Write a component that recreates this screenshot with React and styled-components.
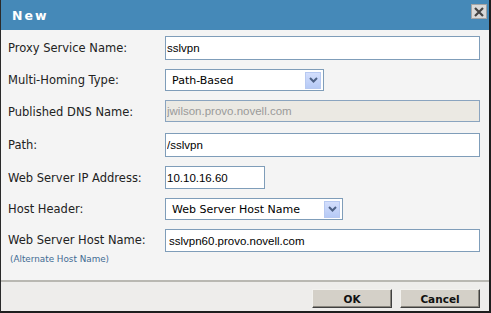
import React from 'react';
import styled, { createGlobalStyle } from 'styled-components';

const GlobalStyle = createGlobalStyle`
  html, body {
    margin: 0;
    padding: 0;
    background: #ffffff;
  }
`;

const Dialog = styled.div`
  width: 491px;
  height: 313px;
  box-sizing: border-box;
  display: flex;
  flex-direction: column;
  border-left: 1px solid #2a2a2a;
  border-right: 2px solid #1e1e1e;
  border-bottom: 2px solid #1e1e1e;
  background: #f4f4f4;
  font-family: 'DejaVu Sans', Verdana, sans-serif;
`;

const TitleBar = styled.div`
  height: 30px;
  flex: none;
  display: flex;
  align-items: flex-start;
  justify-content: space-between;
  background: #4589b8;
  padding: 0 2px 0 11px;
`;

const Title = styled.h1`
  margin: 9px 0 0;
  font-size: 12.5px;
  font-weight: bold;
  letter-spacing: 2px;
  color: #ffffff;
  line-height: 13px;
`;

const CloseButton = styled.button`
  margin-top: 4px;
  width: 16px;
  height: 15px;
  padding: 0;
  display: flex;
  align-items: center;
  justify-content: center;
  background: #d9d9d9;
  border: 1px solid #a4a4a4;
  box-sizing: border-box;
  cursor: pointer;
`;

const Form = styled.div`
  flex: 1;
  display: grid;
  grid-template-columns: 157px 1fr;
  align-items: center;
  align-content: start;
  row-gap: 9px;
  padding: 6px 9px 0 7px;
`;

const Label = styled.label`
  font-size: 11.5px;
  color: #222222;
  line-height: ${p => p.$tall ? '23px' : 'normal'};
`;

const LabelStack = styled.div`
  display: flex;
  flex-direction: column;
  align-items: flex-start;
  align-self: start;
`;

const AltLink = styled.a`
  font-size: 8.8px;
  color: #3f6b93;
  line-height: 14px;
  padding-left: 2px;
  text-decoration: none;
`;

const TextInput = styled.input`
  box-sizing: border-box;
  width: ${p => p.$width || '100%'};
  height: ${p => p.$height || '24px'};
  margin: 0 0 ${p => p.$after || '0'};
  padding: 0 ${p => p.$pad || '1px'};
  border: 1px solid #7f9db9;
  background: #ffffff;
  color: #000000;
  font-family: 'Liberation Sans', Arial, sans-serif;
  font-size: 11.5px;
  align-self: ${p => p.$top ? 'start' : 'center'};
  outline: none;

  &:disabled {
    background: #ebe9e3;
    color: #9a9a9a;
    border-color: #8aa4bf;
  }
`;

const Select = styled.div`
  box-sizing: border-box;
  width: ${p => p.$width};
  height: 22px;
  display: flex;
  align-items: center;
  justify-content: space-between;
  padding: 0 2px 0 6px;
  border: 1px solid #7f9db9;
  background: #ffffff;
  font-size: 11px;
  color: #000000;
`;

const ArrowBox = styled.span`
  width: 16px;
  height: 17px;
  box-sizing: border-box;
  display: flex;
  align-items: center;
  justify-content: center;
  border: 1px solid #b7c9f1;
  background: linear-gradient(#d3defc, #b6caf6);
`;

const Footer = styled.div`
  flex: none;
  height: 31px;
  box-sizing: border-box;
  display: flex;
  justify-content: flex-end;
  align-items: flex-start;
  gap: 8px;
  padding: 7px 9px 0 0;
  border-top: 2px solid #b9b8b2;
  background: #eeedeb;
`;

const Button = styled.button`
  width: ${p => p.$width || '80px'};
  height: 19px;
  padding: 0;
  box-sizing: border-box;
  background: #d4d0c8;
  border: 1px solid;
  border-color: #f2f1ee #404040 #404040 #f2f1ee;
  box-shadow: inset -1px -1px 0 #8a877f;
  font-family: 'DejaVu Sans', Verdana, sans-serif;
  font-size: 10.5px;
  font-weight: bold;
  color: #111111;
`;

const Chevron = () => (
  <svg width="9" height="6" viewBox="0 0 9 6">
    <path d="M1 1 L4.5 4.5 L8 1" fill="none" stroke="#4d6185" strokeWidth="2" />
  </svg>
);

const SelectBox = ({ value, width }) => (
  <Select $width={width}>
    <span>{value}</span>
    <ArrowBox>
      <Chevron />
    </ArrowBox>
  </Select>
);

export default function App() {
  return (
    <>
      <GlobalStyle />
      <Dialog>
        <TitleBar>
          <Title>New</Title>
          <CloseButton aria-label="Close">
            <svg width="10" height="10" viewBox="0 0 10 10">
              <path d="M1 1 L9 9 M9 1 L1 9" stroke="#444444" strokeWidth="2.2" />
            </svg>
          </CloseButton>
        </TitleBar>

        <Form>
          <Label>Proxy Service Name:</Label>
          <TextInput defaultValue="sslvpn" />

          <Label>Multi-Homing Type:</Label>
          <SelectBox value="Path-Based" width="159px" />

          <Label>Published DNS Name:</Label>
          <TextInput defaultValue="jwilson.provo.novell.com" disabled $height="22px" $after="2px" />

          <Label>Path:</Label>
          <TextInput defaultValue="/sslvpn" />

          <Label>Web Server IP Address:</Label>
          <TextInput defaultValue="10.10.16.60" $width="100px" $height="23px" />

          <Label>Host Header:</Label>
          <SelectBox value="Web Server Host Name" width="178px" />

          <LabelStack>
            <Label $tall>Web Server Host Name:</Label>
            <AltLink href="#">(Alternate Host Name)</AltLink>
          </LabelStack>
          <TextInput defaultValue="sslvpn60.provo.novell.com" $height="23px" $pad="3px" $top />
        </Form>

        <Footer>
          <Button>OK</Button>
          <Button>Cancel</Button>
        </Footer>
      </Dialog>
    </>
  );
}
